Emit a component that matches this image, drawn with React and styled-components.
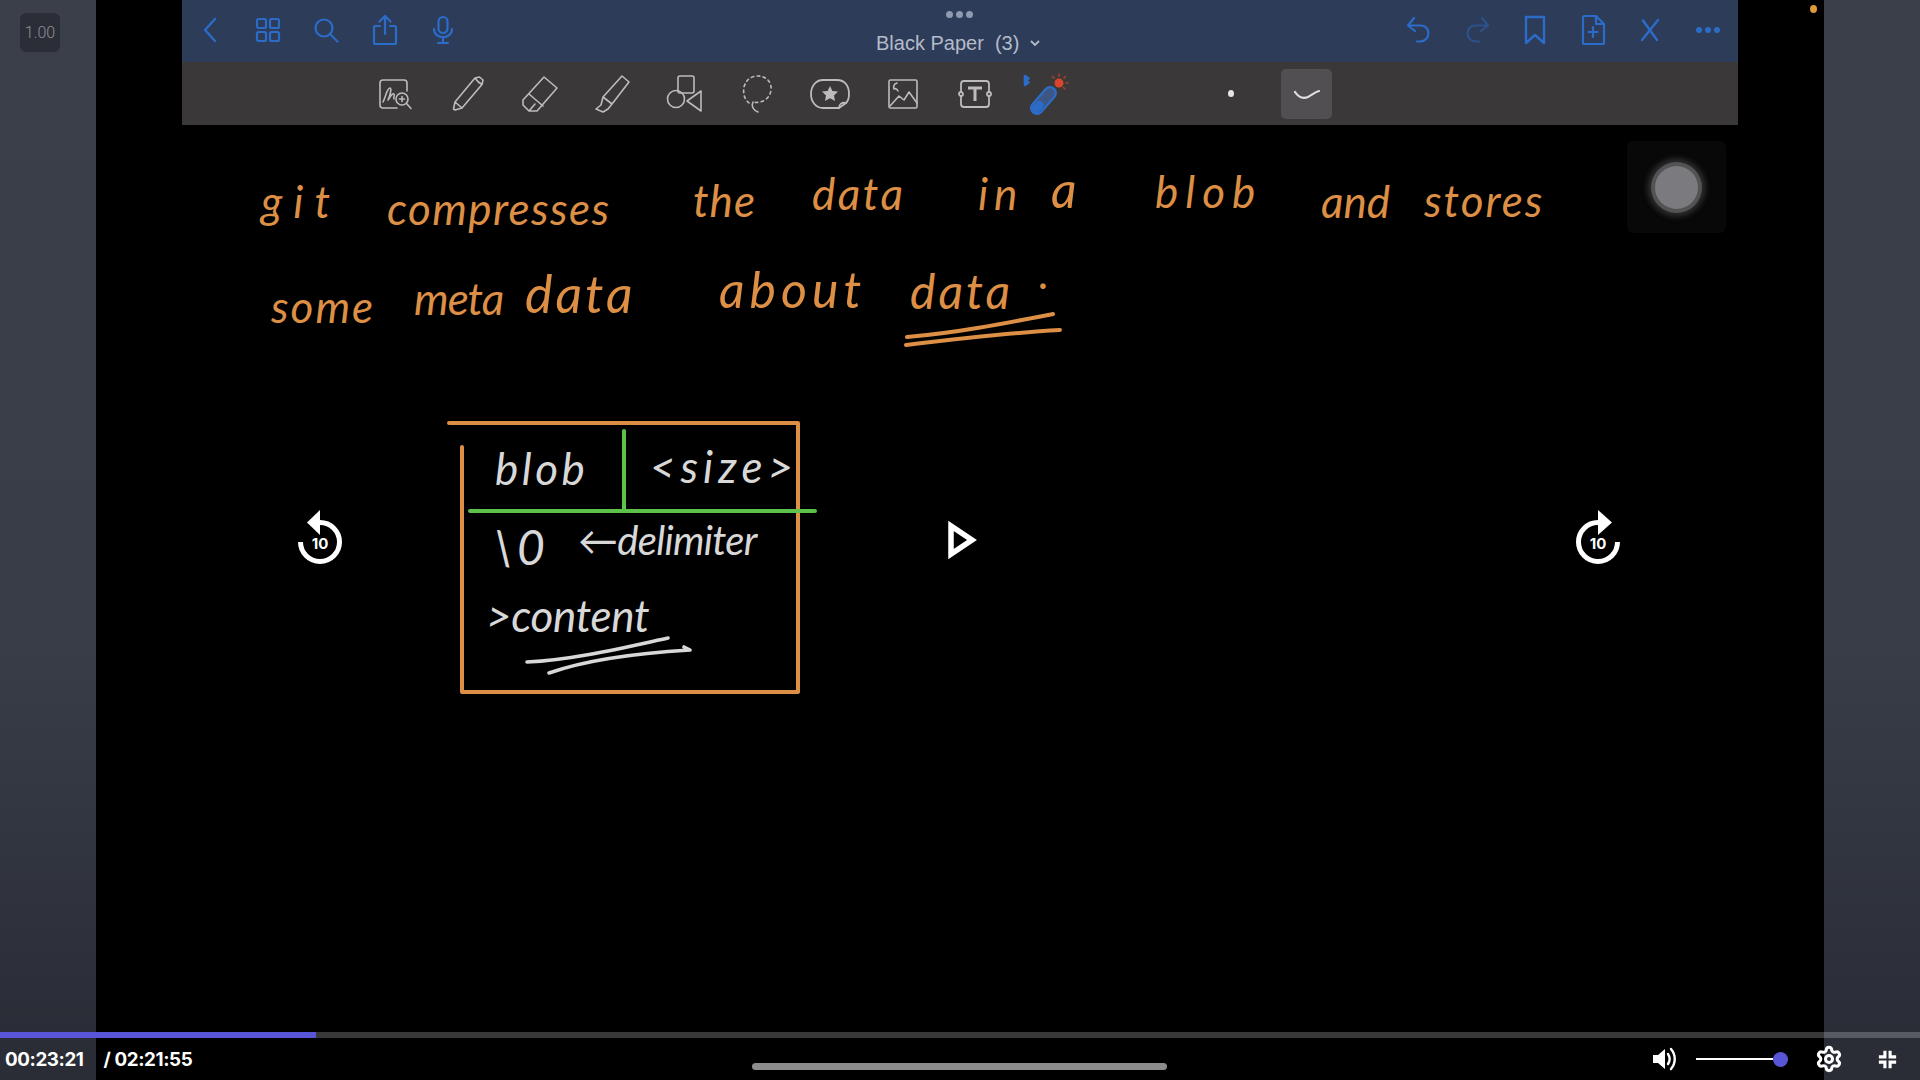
import styled, { createGlobalStyle } from 'styled-components';
import { Settings } from 'lucide-react';

const BLUE = '#2c6cc9';
const ORANGE = '#dc8f45';
const CHALK = '#d8d8d8';

const GlobalStyle = createGlobalStyle`
    html, body {
        margin: 0;
        padding: 0;
        width: 1920px;
        height: 1080px;
        overflow: hidden;
        background: #000;
        font-family: "Inter", "Liberation Sans", sans-serif;
    }
`;

const Page = styled.div`
    position: relative;
    display: flex;
    width: 1920px;
    height: 1080px;
    overflow: hidden;
`;

const Rail = styled.div`
    width: 96px;
    flex: none;
    padding: 13px 0 0 20px;
    box-sizing: border-box;
    background: linear-gradient(#3a3f4a 0%, #383d48 60%, #2a2d36 96%);
`;

const SpeedChip = styled.div`
    display: flex;
    align-items: center;
    justify-content: center;
    width: 40px;
    height: 39px;
    border-radius: 6px;
    background: #2b2e36;
    color: #8b8e95;
    font: 300 16px "Roboto", sans-serif;
`;

const Stage = styled.main`
    flex: 1;
    display: flex;
    flex-direction: column;
    background: #000;
`;

const Toolbar = styled.header`
    flex: none;
    margin: 0 86px;
`;

const TopBar = styled.div`
    position: relative;
    display: flex;
    justify-content: space-between;
    align-items: center;
    height: 62px;
    padding: 0 1px 2px 0;
    box-sizing: border-box;
    background: #2d3c59;
    color: ${BLUE};
`;

const IconGroup = styled.div`
    display: flex;
    align-items: center;
    margin-left: ${p => p.$shift || 0}px;
`;

const TopSlot = styled.span`
    display: flex;
    align-items: center;
    justify-content: center;
    width: ${p => p.$pitch}px;
    height: 40px;
    opacity: ${p => (p.$dim ? 0.45 : 1)};
`;

const TitleBlock = styled.div`
    position: absolute;
    left: 694px;
    top: 11px;
    display: flex;
    flex-direction: column;
    align-items: flex-start;
    color: #b4bbc9;
`;

const GrabDots = styled.div`
    display: flex;
    gap: 3px;
    margin: 0 0 13px 70px;
`;

const GrabDot = styled.i`
    width: 7px;
    height: 7px;
    border-radius: 50%;
    background: #8d9ab0;
`;

const Title = styled.div`
    display: flex;
    align-items: center;
    gap: 11px;
    font: 400 20px/24px "Liberation Sans", sans-serif;
    white-space: pre;
`;

const ToolRow = styled.div`
    display: flex;
    align-items: center;
    height: 63px;
    padding-left: 177px;
    background: #3b383a;
    color: #bcbcbc;
`;

const ToolSlot = styled.span`
    display: flex;
    align-items: center;
    justify-content: center;
    width: 72.5px;
    height: 50px;
`;

const PenDot = styled.i`
    width: 6px;
    height: 7px;
    margin-left: 144px;
    border-radius: 50%;
    background: #e6e6e6;
`;

const StrokeTile = styled.div`
    display: flex;
    align-items: center;
    justify-content: center;
    width: 51px;
    height: 50px;
    margin-left: 47px;
    border-radius: 5px;
    background: #514f51;
`;

const Board = styled.section`
    position: relative;
    flex: 1;
`;

const Ink = styled.svg`
    position: absolute;
    left: 0;
    top: 0;
    fill: none;
    stroke-linecap: round;
    stroke-linejoin: round;
`;

// handwriting on the board, x and baseline are page coordinates
const Word = styled.span`
    position: absolute;
    left: ${p => p.$x - 96}px;
    top: ${p => p.$base - 125 - (p.$size || 44) * 0.887}px;
    color: ${p => p.$color || ORANGE};
    font: italic 400 ${p => p.$size || 44}px/1 "Lato", "DejaVu Sans", sans-serif;
    letter-spacing: ${p => p.$gap || 0}px;
    white-space: pre;
`;

const RecordBox = styled.div`
    position: absolute;
    left: 1531px;
    top: 16px;
    display: flex;
    align-items: center;
    justify-content: center;
    width: 99px;
    height: 92px;
    background: #080808;
    border-radius: 6px;
`;

const RecordKnob = styled.div`
    width: 43px;
    height: 43px;
    border-radius: 50%;
    background: #7b7b7f;
    box-shadow: 0 0 0 4px #535355, 0 0 5px 8px #2a2a2b;
`;

const RecDot = styled.i`
    position: absolute;
    left: 1810px;
    top: 5px;
    width: 7px;
    height: 8px;
    border-radius: 50%;
    background: #e09a3a;
`;

const SeekIcon = styled.svg`
    position: absolute;
    left: ${p => p.$x}px;
    top: ${p => p.$y || 500}px;
    color: #fff;
`;

const PlayerBar = styled.footer`
    position: absolute;
    left: 0;
    right: 0;
    bottom: 0;
    height: 48px;
`;

const Track = styled.div`
    height: 6px;
    background: rgba(255, 255, 255, 0.22);
`;

const Played = styled.div`
    width: 316px;
    height: 100%;
    background: #5856d6;
`;

const Controls = styled.div`
    position: relative;
    display: flex;
    align-items: center;
    height: 42px;
    padding: 0 23px 0 5px;
    color: #fff;
`;

const Time = styled.span`
    font: 700 18.8px "Inter", "Liberation Sans", sans-serif;
    letter-spacing: -0.4px;
    margin-right: ${p => p.$gap || 0}px;
`;

const HomeBar = styled.i`
    position: absolute;
    left: 752px;
    top: 25px;
    width: 415px;
    height: 7px;
    border-radius: 4px;
    background: #8c8c8c;
`;

const ControlsRight = styled.div`
    display: flex;
    align-items: center;
    margin-left: auto;
`;

const Volume = styled.div`
    display: flex;
    align-items: center;
    width: 92px;
    margin: 0 27px 0 19px;
`;

const VolumeLine = styled.i`
    flex: 1;
    height: 2px;
    background: #fff;
`;

const VolumeKnob = styled.i`
    width: 15px;
    height: 15px;
    border-radius: 50%;
    background: #5856d6;
`;

const ExitIcon = styled.svg`
    margin-left: 35px;
`;

const Glyph = ({ w = 32, h = 32, sw = 1.6, children }) => (
    <svg width={w} height={h} viewBox={`0 0 ${w} ${h}`} fill="none" stroke="currentColor" strokeWidth={sw} strokeLinecap="round" strokeLinejoin="round">
        {children}
    </svg>
);

const topLeftIcons = [
    <Glyph w={16} h={26} sw={2.4}><path d="M13 2 3 13l10 11" /></Glyph>,
    <Glyph w={26} h={26} sw={2.2}><rect x="2" y="2" width="9" height="9" rx="1.5" /><rect x="15" y="2" width="9" height="9" rx="1.5" /><rect x="2" y="15" width="9" height="9" rx="1.5" /><rect x="15" y="15" width="9" height="9" rx="1.5" /></Glyph>,
    <Glyph w={26} h={26} sw={2.2}><circle cx="11" cy="11" r="8.5" /><path d="m17 17 7.5 7.5" /></Glyph>,
    <Glyph w={26} h={32} sw={2.2}><path d="M13 20V2M7.5 7.5 13 2l5.5 5.5M8 12H3.5A1.5 1.5 0 0 0 2 13.5v15A1.5 1.5 0 0 0 3.5 30h19a1.5 1.5 0 0 0 1.5-1.5v-15a1.5 1.5 0 0 0-1.5-1.5H18" /></Glyph>,
    <Glyph w={24} h={30} sw={2.2}><rect x="7.5" y="2" width="9" height="16" rx="4.5" /><path d="M3 14c0 11 18 11 18 0M12 22v6M7 28h10" /></Glyph>,
];

const topRightIcons = [
    <Glyph w={28} h={28} sw={2.2}><path d="M9 2 3 9.5 10 15M3.5 9.5H16c10 0 10 16-1 16h-3" /></Glyph>,
    <Glyph w={28} h={28} sw={2.2}><path d="m19 2 6 7.5L18 15M24.5 9.5H12c-10 0-10 16 1 16h3" /></Glyph>,
    <Glyph w={24} h={30} sw={2.4}><path d="M3 2h18v26l-9-8-9 8z" /></Glyph>,
    <Glyph w={26} h={32} sw={2.2}><path d="M3 3.5A1.5 1.5 0 0 1 4.500 2H16l8 8v18.500a1.500 1.500 0 0 1-1.500 1.500h-18A1.500 1.500 0 0 1 3 28.500zM16 2v8h8M13 13v10M8.500 18h9" /></Glyph>,
    <Glyph w={24} h={24} sw={2.4}><path d="M5 2.500 19 22M20 2 4 22" /></Glyph>,
    <Glyph w={26} h={8} sw={0}><circle cx="4" cy="4" r="3" fill="currentColor" /><circle cx="13" cy="4" r="3" fill="currentColor" /><circle cx="22" cy="4" r="3" fill="currentColor" /></Glyph>,
];

const toolIcons = [
    <Glyph w={36} h={34}><path d="M30 14V6a3 3 0 0 0-3-3H6a3 3 0 0 0-3 3v22a3 3 0 0 0 3 3h14" /><path d="M6 25c3-6 4-14 7-14 2 0 0 8-2 12 3-5 5-7 6-6s-1 4 0 5" /><circle cx="25" cy="22" r="6" /><path d="m29.500 26.500 4.500 5M25 19.500v5M22.500 22h5" /></Glyph>,
    <Glyph w={36} h={38}><path d="M5 35 3.500 34 5 27 25 3l4.500-1L33 5l-1 4.500L12 33zM5 27l7 6M25 3c2 3 4 5 7 6.500" /></Glyph>,
    <Glyph w={40} h={40}><path d="M24 3 37 14 17 37H9l-6-6v-5zM9 20l14 12M9 37l6-7" /></Glyph>,
    <Glyph w={38} h={40}><path d="M28 2 35 8 18 30l-9-7zM9 23l-2 8-5 4 7 3 5-3 4-5" /></Glyph>,
    <Glyph w={38} h={40}><rect x="12" y="2" width="16" height="17" rx="2" /><circle cx="10" cy="25" r="8.500" /><path d="M35 17v20L21 27z" /></Glyph>,
    <Glyph w={34} h={42}><path d="M8 30C3 26 2 20 3 14 5 6 11 3 17 3c8 0 14 6 13 14-1 9-10 14-18 12" strokeDasharray="2.500 3.500" /><path d="M12 29c-2 4 0 8 5 10" /></Glyph>,
    <Glyph w={42} h={34} sw={1.8}><path d="M14 3h14c8 0 12 6 12 14 0 5-2 8-3 9l-7 5H14C7 31 2 25 2 17S7 3 14 3z" /><path d="M30 31c0-4 3-6 7-5" /><path d="m21 9 2.400 5 5.600.6-4 3.800 1 5.600-5-2.800-5 2.800 1-5.600-4-3.800 5.600-.6z" fill="currentColor" stroke="none" /></Glyph>,
    <Glyph w={34} h={34}><rect x="3" y="3" width="28" height="28" rx="1.500" /><path d="m4 29 9-10 5 4 5-8 8 11M11 6c-3 1-4 3-3 6 2-1 3 0 4 2" /></Glyph>,
    <Glyph w={38} h={34} sw={1.8}><rect x="5" y="4" width="28" height="26" rx="3" /><circle cx="5" cy="17" r="2" fill="#3b383a" /><circle cx="33" cy="17" r="2" fill="#3b383a" /><path d="M12 11h14M19 11v13" strokeWidth="3" strokeLinecap="butt" /></Glyph>,
];

const PenIcon = () => (
    <svg width="50" height="46" viewBox="0 0 50 46" fill="none" strokeLinecap="round" strokeLinejoin="round">
        <path d="M2 5v9l3.500-2.500L2 9.500l3.500-2z" stroke={BLUE} strokeWidth="2.600" />
        <path d="M14 37 27 22" stroke={BLUE} strokeWidth="14" />
        <path d="M14 37 27 22" stroke="#3d5684" strokeWidth="9.500" />
        <path d="M13 38 16.500 34" stroke={BLUE} strokeWidth="8" />
        <circle cx="36" cy="12" r="4.500" fill="#d8452e" />
        <path d="M36 3v2M42.500 5.500l-1.500 1.500M45 12h-2M29.500 5.500 31 7M42 18l-1.500-1.500" stroke="#a8432f" strokeWidth="1.500" />
    </svg>
);

const BackTen = () => (
    <SeekIcon $x={280} $y={499} width="100" height="80" viewBox="0 0 100 80" fill="none">
        <path d="M20.500 43A19.500 19.500 0 1 0 40 23.500" stroke="currentColor" strokeWidth="5" />
        <path d="M40 11v25L27 23.500z" fill="currentColor" />
        <text x="40" y="50" textAnchor="middle" fill="currentColor" fontFamily="Inter, Liberation Sans, sans-serif" fontWeight="700" fontSize="15">10</text>
    </SeekIcon>
);

const ForwardTen = () => (
    <SeekIcon $x={1560} $y={499} width="100" height="80" viewBox="0 0 100 80" fill="none">
        <path d="M57.500 43A19.500 19.500 0 1 1 38 23.500" stroke="currentColor" strokeWidth="5" />
        <path d="M38 11v25L52 23.500z" fill="currentColor" />
        <text x="38" y="50" textAnchor="middle" fill="currentColor" fontFamily="Inter, Liberation Sans, sans-serif" fontWeight="700" fontSize="15">10</text>
    </SeekIcon>
);

const PlayIcon = () => (
    <SeekIcon $x={920} width="100" height="80" viewBox="0 0 100 80" fill="none">
        <path d="M31 26v28l21-14z" stroke="currentColor" strokeWidth="5.500" strokeLinejoin="miter" />
    </SeekIcon>
);

const words = [
    { text: 'git', x: 261, base: 218, gap: 11 },
    { text: 'compresses', x: 387, base: 225, gap: 1.4 },
    { text: 'the', x: 693, base: 217, gap: 1 },
    { text: 'data', x: 812, base: 210, gap: 2.500 },
    { text: 'in', x: 978, base: 210, gap: 6 },
    { text: 'a', x: 1051, base: 208, size: 50 },
    { text: 'blob', x: 1155, base: 208, gap: 7 },
    { text: 'and', x: 1321, base: 218, gap: 0 },
    { text: 'stores', x: 1424, base: 217, gap: 2 },
    { text: 'some', x: 271, base: 323, gap: 2 },
    { text: 'meta', x: 414, base: 315, gap: -1 },
    { text: 'data', x: 525, base: 313, gap: 3, size: 52 },
    { text: 'about', x: 719, base: 308, gap: 5, size: 50 },
    { text: 'data', x: 910, base: 310, gap: 3, size: 48 },
    { text: '.', x: 1039, base: 289 },
    { text: 'blob', x: 495, base: 485, gap: 3.500, color: CHALK },
    { text: '<size>', x: 650, base: 483, gap: 5, size: 44, color: CHALK },
    { text: '\\0', x: 493, base: 566, gap: 4, size: 48, color: CHALK },
    { text: '←delimiter', x: 578, base: 555, gap: -0.700, size: 40, color: CHALK },
    { text: '>content', x: 486, base: 632, gap: -0.300, size: 44, color: CHALK },
];

const App = () => (
    <Page>
        <GlobalStyle />
        <Rail>
            <SpeedChip>1.00</SpeedChip>
        </Rail>
        <Stage>
            <Toolbar>
                <TopBar>
                    <IconGroup $shift={-1}>
                        {topLeftIcons.map((icon, i) => <TopSlot key={i} $pitch={58.2}>{icon}</TopSlot>)}
                    </IconGroup>
                    <TitleBlock>
                        <GrabDots><GrabDot /><GrabDot /><GrabDot /></GrabDots>
                        <Title>
                            Black Paper  (3)
                            <svg width="10" height="7" viewBox="0 0 10 7" fill="none" stroke="currentColor" strokeWidth="1.800"><path d="m1 1 4 4 4-4" /></svg>
                        </Title>
                    </TitleBlock>
                    <IconGroup>
                        {topRightIcons.map((icon, i) => <TopSlot key={i} $pitch={57.8} $dim={i === 1}>{icon}</TopSlot>)}
                    </IconGroup>
                </TopBar>
                <ToolRow>
                    {toolIcons.map((icon, i) => <ToolSlot key={i}>{icon}</ToolSlot>)}
                    <ToolSlot><PenIcon /></ToolSlot>
                    <PenDot />
                    <StrokeTile>
                        <svg width="28" height="14" viewBox="0 0 28 14" fill="none" stroke="#e0e0e0" strokeWidth="2.200" strokeLinecap="round"><path d="M2 5c4 6 8 7 13 5 4-2 7-5 11-6" /></svg>
                    </StrokeTile>
                </ToolRow>
            </Toolbar>
            <Board>
                <Ink width="1728" height="907" viewBox="96 125 1728 907">
                    <g stroke={ORANGE} strokeWidth="4">
                        <path d="M449 423H798V692H462V447" />
                        <path d="M907 337c50-4 100-14 146-23" />
                        <path d="M906 345c50-6 100-12 154-15" />
                    </g>
                    <g stroke="#5cc24a" strokeWidth="4">
                        <path d="M624 431V511" />
                        <path d="M470 511H815" />
                    </g>
                    <g stroke={CHALK} strokeWidth="3.600">
                        <path d="M527 662c45-2 95-14 141-24" />
                        <path d="M549 673c40-14 90-20 141-23l-6-3" />
                    </g>
                </Ink>
                {words.map((w, i) => (
                    <Word key={i} $x={w.x} $base={w.base} $gap={w.gap} $size={w.size} $color={w.color}>{w.text}</Word>
                ))}
                <RecordBox><RecordKnob /></RecordBox>
            </Board>
        </Stage>
        <Rail />
        <RecDot />
        <BackTen />
        <PlayIcon />
        <ForwardTen />
        <PlayerBar>
            <Track><Played /></Track>
            <Controls>
                <Time $gap={20}>00:23:21</Time>
                <Time>/ 02:21:55</Time>
                <HomeBar />
                <ControlsRight>
                    <svg width="26" height="26" viewBox="0 0 26 26" fill="none">
                        <path d="M2 9h5l7-6v20l-7-6H2z" fill="#fff" />
                        <path d="M17 8c2 3 2 7 0 10M20 3c5 6 5 14 0 20" stroke="#fff" strokeWidth="2.400" strokeLinecap="round" />
                    </svg>
                    <Volume>
                        <VolumeLine />
                        <VolumeKnob />
                    </Volume>
                    <Settings size={28} strokeWidth={2.600} color="#fff" />
                    <ExitIcon width="19" height="19" viewBox="0 0 22 22" fill="none" stroke="#fff" strokeWidth="3.600">
                        <path d="M8 1v7H1M14 1v7h7M8 21v-7H1M14 21v-7h7" />
                    </ExitIcon>
                </ControlsRight>
            </Controls>
        </PlayerBar>
    </Page>
);

export default App;
